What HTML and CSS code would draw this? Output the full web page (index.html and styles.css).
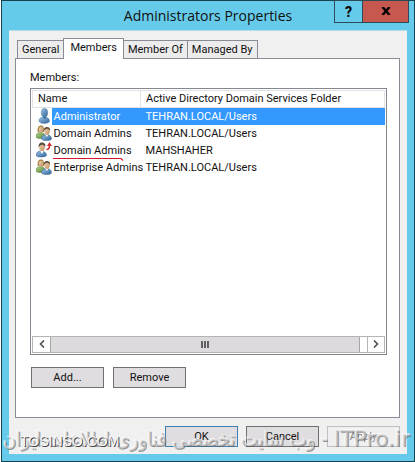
FILE: index.html
```html
<!DOCTYPE html>
<html lang="en">
<head>
    <meta charset="UTF-8">
    <title>Administrators Properties</title>
    <link rel="stylesheet" href="styles.css">
</head>
<body>
    <svg class="defs" width="0" height="0">
        <defs>
            <linearGradient id="blue" x1="0" y1="0" x2="1" y2="1">
                <stop offset="0" stop-color="#9cc4e6"/>
                <stop offset="1" stop-color="#2f6398"/>
            </linearGradient>
            <linearGradient id="green" x1="0" y1="0" x2="1" y2="1">
                <stop offset="0" stop-color="#b5d387"/>
                <stop offset="1" stop-color="#56883c"/>
            </linearGradient>
            <linearGradient id="skin" x1="0" y1="0" x2="1" y2="1">
                <stop offset="0" stop-color="#f0d6b4"/>
                <stop offset="1" stop-color="#c08e62"/>
            </linearGradient>
            <symbol id="user" viewBox="0 0 16 16">
                <path d="M3 13.500C3 10 5 9 8 9s5.500 1 5.500 4.500C12 16 4.500 16 3 13.500z" fill="url(#blue)" stroke="#47779f" stroke-width=".5"/>
                <path d="M7 8h3l-1 3.500z" fill="#2f6398"/>
                <ellipse cx="8.500" cy="4.700" rx="3.200" ry="4.200" fill="url(#blue)" stroke="#47779f" stroke-width=".5"/>
            </symbol>
            <symbol id="group" viewBox="0 0 16 16">
                <path d="M0 12c0-3 1.500-4.500 4.500-4.500S9 9 9 12c-1 2-8 2-9 0z" fill="url(#green)" stroke="#56783c" stroke-width=".5"/>
                <path d="M1.700 7C1 2 3 .5 5 .5S8.500 2 8 7z" fill="#a4813c"/>
                <ellipse cx="5" cy="4.800" rx="2.200" ry="3" fill="url(#skin)"/>
                <path d="M5.500 14c0-3 2-4.500 5-4.500s5 1.500 5 4.500c-1 2-9 2-10 0z" fill="url(#blue)" stroke="#35628c" stroke-width=".5"/>
                <path d="M9 9h3.500L11 12z" fill="#fff"/>
                <ellipse cx="11" cy="6.300" rx="2.700" ry="3.600" fill="url(#skin)"/>
                <path d="M8 6c-.3-3 1-4 3-4s3.600 1.500 3 4c-.8-2-2-2.300-3-2.300S9 4.500 8 6z" fill="#5a4630"/>
            </symbol>
            <symbol id="foreign" viewBox="0 0 16 16">
                <path d="M0 13.500C0 10.500 2 9 5 9s5.500 1.500 5.500 4.500c-1.500 2-9 2-10.500 0z" fill="url(#blue)" stroke="#35628c" stroke-width=".5"/>
                <path d="M4 8.500h4L6 12z" fill="#fff"/>
                <ellipse cx="6" cy="5.200" rx="2.800" ry="3.900" fill="url(#skin)"/>
                <path d="M2.800 5.500C2 2 4 .5 6 .5s4 1.500 3.200 4.500C8 3 7 2.700 6 2.700S3.500 3.500 2.800 5.500z" fill="#5a4a42"/>
                <path d="M10.500 7.500c2.500 0 3-1.500 3-4" fill="none" stroke="#d02f35" stroke-width="1.600"/>
                <path d="M11 4l2.500-4L16 4z" fill="#d02f35"/>
            </symbol>
        </defs>
    </svg>

    <div class="window">
        <header class="titlebar">
            <h1 class="title">Administrators Properties</h1>
            <div class="caption">
                <button class="help" aria-label="Help">?</button>
                <button class="close" aria-label="Close"><svg width="10" height="8" viewBox="0 0 10 8"><path d="M1.500 0l7 8M8.500 0l-7 8" stroke="#000" stroke-width="2.400"/></svg></button>
            </div>
        </header>

        <main class="client">
            <nav class="tabs">
                <button class="tab">General</button>
                <button class="tab cur">Members</button>
                <button class="tab">Member Of</button>
                <button class="tab">Managed By</button>
            </nav>

            <section class="page">
                <h2 class="label" id="members">Members:</h2>
                <div class="list">
                    <table class="members" aria-labelledby="members">
                        <thead>
                            <tr><th class="name">Name</th><th>Active Directory Domain Services Folder</th></tr>
                        </thead>
                        <tbody>
                            <tr class="selected">
                                <td><div class="item"><svg class="icon"><use href="#user"/></svg><span>Administrator</span></div></td>
                                <td>TEHRAN.LOCAL/Users</td>
                            </tr>
                            <tr>
                                <td><div class="item"><svg class="icon"><use href="#group"/></svg><span>Domain Admins</span></div></td>
                                <td>TEHRAN.LOCAL/Users</td>
                            </tr>
                            <tr>
                                <td><div class="item"><svg class="icon"><use href="#foreign"/></svg><span>Domain Admins</span><svg class="mark" width="72" height="4" viewBox="0 0 72 4"><path d="M0 1.500h68l2 2" fill="none" stroke="#d8142c" stroke-width="1.200"/></svg></div></td>
                                <td>MAHSHAHER</td>
                            </tr>
                            <tr>
                                <td><div class="item"><svg class="icon"><use href="#group"/></svg><span>Enterprise Admins</span></div></td>
                                <td>TEHRAN.LOCAL/Users</td>
                            </tr>
                        </tbody>
                    </table>
                    <div class="scroll">
                        <button class="arrow" aria-label="Scroll left"><svg width="6" height="8" viewBox="0 0 6 8"><path d="M5 .5L1.500 4 5 7.500" fill="none" stroke="#505050" stroke-width="1.600"/></svg></button>
                        <div class="thumb"><i></i><i></i><i></i></div>
                        <button class="arrow" aria-label="Scroll right"><svg width="6" height="8" viewBox="0 0 6 8"><path d="M1 .5L4.500 4 1 7.500" fill="none" stroke="#505050" stroke-width="1.600"/></svg></button>
                    </div>
                </div>
                <div class="actions">
                    <button class="btn">Add...</button>
                    <button class="btn">Remove</button>
                </div>
            </section>

            <footer class="buttons">
                <button class="btn ok">OK</button>
                <button class="btn">Cancel</button>
                <button class="btn" disabled>Apply</button>
            </footer>
        </main>

        <p class="watermark" dir="rtl" lang="fa"><span class="brand">ITPro.ir</span> - وب سایت تخصصی فناوری اطلاعات ایران</p>
        <p class="watermark site">TOSINSO.COM</p>
    </div>
</body>
</html>
```
FILE: styles.css
```css
*{
    margin: 0;
    padding: 0;
    box-sizing: border-box;
}
html,body{
    height: 100%;
}
body{
    padding: 0 0 0 1px;
    background: #fff;
    font: 11px/16px Roboto, "Liberation Sans", sans-serif;
    color: #111;
}
button{
    font: inherit;
    color: inherit;
}
.defs{
    position: absolute;
}
.window{
    position: relative;
    display: flex;
    flex-direction: column;
    min-height: 100%;
    padding: 0 7px 7px;
    background: #66cbea;
    border: 1px solid #17424f;
}
.titlebar{
    position: relative;
    height: 29px;
}
.title{
    font: 14px/29px "Open Sans", sans-serif;
    text-align: center;
}
.caption{
    position: absolute;
    top: -1px;
    right: -2px;
    display: flex;
    height: 23px;
    border: 1px solid #2b4b57;
}
.caption button{
    border: 0;
}
.help{
    width: 27px;
    background: #66cbea;
}
.caption .help{
    font-weight: 900;
    font-size: 14px;
}
.caption .close{
    width: 46px;
    background: #c75850;
    border-left: 1px solid #2b4b57;
}
.client{
    flex: 1;
    display: flex;
    flex-direction: column;
    padding: 7px 7px 7px 6px;
    background: #f0f0f0;
    border-top: 1px solid #b5dce8;
}
.tabs{
    display: flex;
    align-items: flex-end;
    height: 20px;
    padding-left: 2px;
}
.tab{
    height: 18px;
    padding: 0 4px;
    background: #ececec;
    border: 1px solid #898c95;
    border-bottom: 0;
    margin-right: -1px;
    white-space: nowrap;
}
.tab.cur{
    position: relative;
    height: 21px;
    margin-bottom: -1px;
    padding: 0 6px 2px;
    background: #fff;
}
.page{
    flex: 1;
    display: flex;
    flex-direction: column;
    padding: 11px 12px 29px 14px;
    background: #fff;
    border: 1px solid #898c95;
}
.label{
    font-size: 11px;
    font-weight: normal;
    margin-bottom: 2px;
}
.list{
    flex: 1;
    display: flex;
    flex-direction: column;
    justify-content: space-between;
    padding: 1px;
    border: 1px solid #828790;
}
.members{
    width: 100%;
    table-layout: fixed;
    border-collapse: collapse;
}
.members th{
    height: 17px;
    padding-left: 5px;
    border: 1px solid #e2e2e2;
    font-weight: normal;
    text-align: left;
    white-space: nowrap;
}
.members .name{
    width: 108px;
}
.members td{
    height: 17px;
    padding-left: 5px;
    white-space: nowrap;
}
.members td:first-child{
    padding-left: 3px;
    background: #fff;
}
.item{
    position: relative;
    display: flex;
    height: 17px;
}
.item span{
    flex: 1;
    padding-left: 2px;
    line-height: 17px;
}
.icon{
    flex: none;
    width: 16px;
    height: 16px;
}
.selected td,
.selected span{
    background: #3399ff;
    color: #fff;
}
.selected td:first-child{
    background: #fff;
}
.mark{
    position: absolute;
    z-index: 1;
    left: 17px;
    bottom: -2px;
}
.scroll{
    display: flex;
    height: 17px;
    background: #fff;
    border: 1px solid #b4b4b4;
}
.arrow{
    width: 17px;
    background: #fff;
    border: 0;
}
.arrow:last-child{
    border-left: 1px solid #b4b4b4;
}
.thumb{
    flex: 1;
    display: flex;
    justify-content: center;
    align-items: center;
    gap: 1px;
    margin-right: 7px;
    background: #dcdadc;
    border: solid #a6a6a6;
    border-width: 0 1px;
}
.thumb i{
    width: 2px;
    height: 7px;
    background: #606060;
}
.actions{
    display: flex;
    gap: 9px;
    margin-top: 12px;
    padding-left: 1px;
}
.btn{
    width: 73px;
    height: 21px;
    background: #dfdddf;
    border: 1px solid #707070;
}
.btn.ok{
    border-color: #3c7fb1;
}
.btn:disabled{
    background: #efefef;
    border-color: #bfbfbf;
    color: #838383;
}
.buttons{
    display: flex;
    justify-content: flex-end;
    gap: 8px;
    margin-top: 8px;
}
.watermark{
    position: absolute;
    left: 4px;
    right: 4px;
    bottom: 6px;
    font: 20px/32px "DejaVu Sans Condensed", "DejaVu Sans", sans-serif;
    text-align: right;
    white-space: nowrap;
    color: rgba(205, 205, 205, .7);
    text-shadow: 1px 1px 0 rgba(90, 90, 90, .6), -1px -1px 0 rgba(255, 255, 255, .7);
}
.brand{
    font: 22px/32px "DejaVu Sans", sans-serif;
}
.watermark.site{
    left: 18px;
    bottom: 10px;
    right: auto;
    font: 14px/20px "Liberation Sans", sans-serif;
    color: #f5f5f5;
    text-shadow: 1px 1px 0 #444;
}
```
